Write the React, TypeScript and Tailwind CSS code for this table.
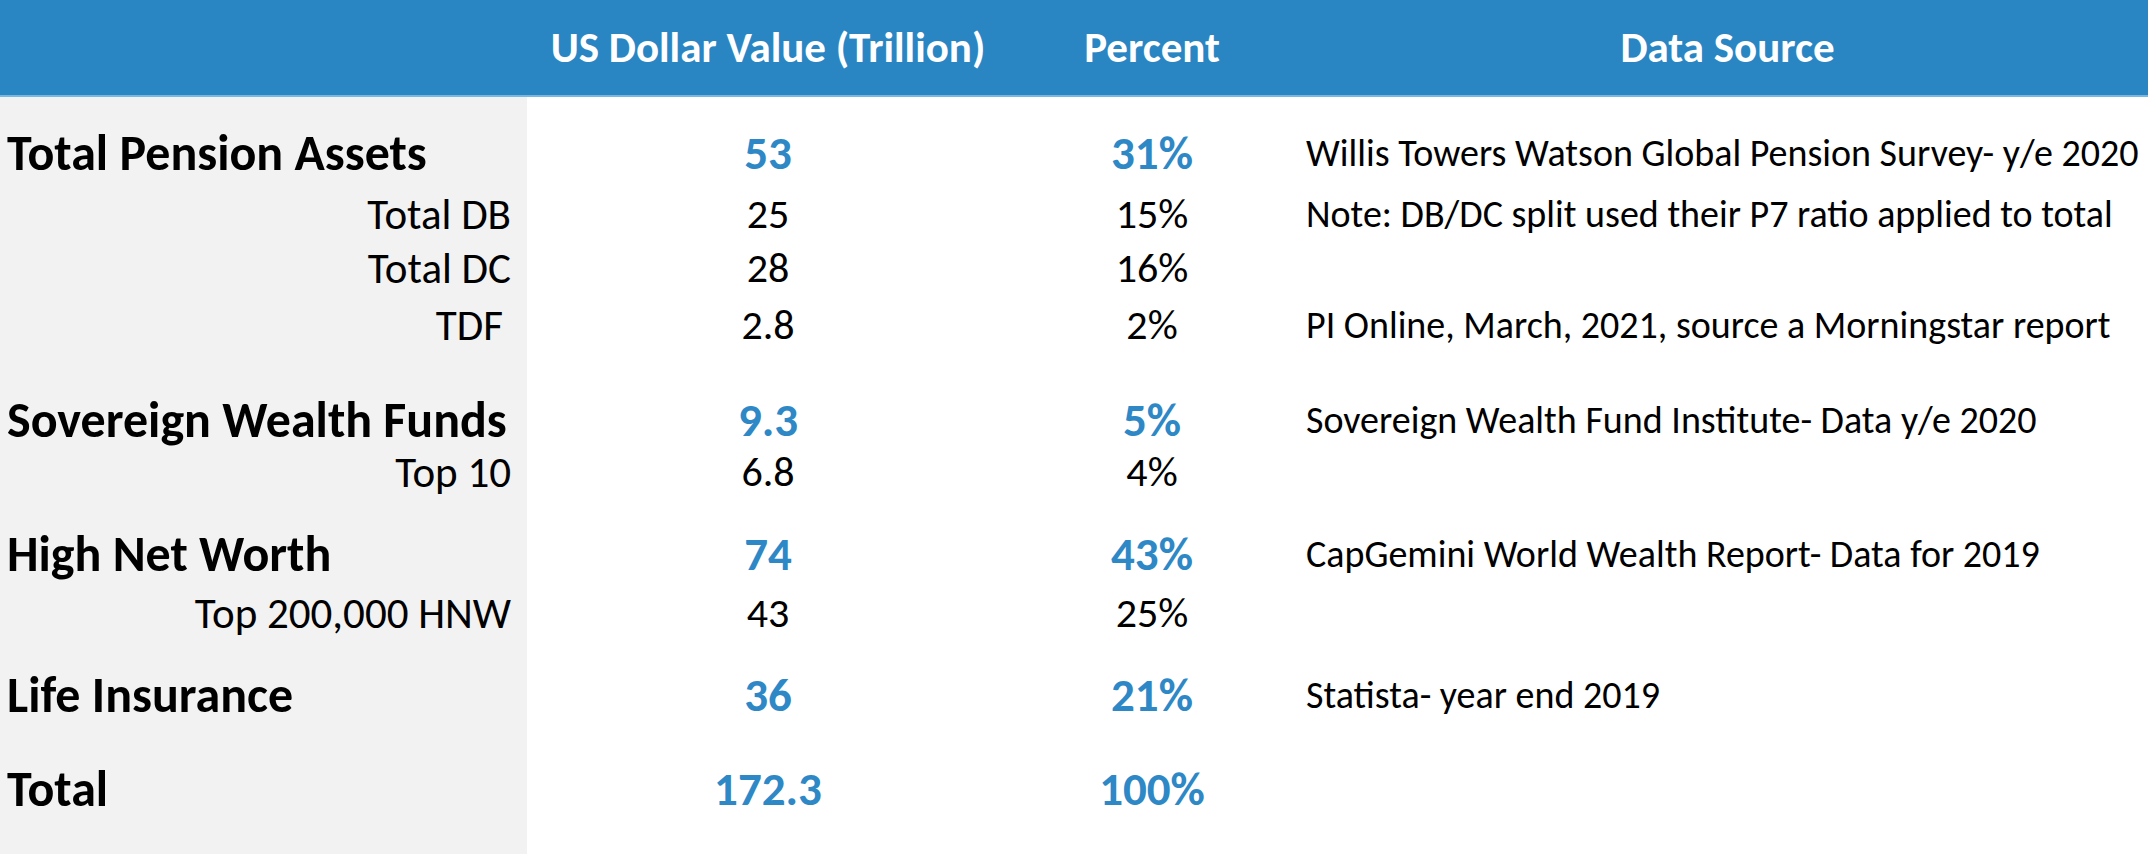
import React from "react";

type Row = {
  label: string;
  bold: boolean;
  value: string;
  pct: string;
  source: string;
  mt: string;
  extraPr?: boolean;
};

const rows: Row[] = [
  { label: "Total Pension Assets", bold: true, value: "53", pct: "31%", source: "Willis Towers Watson Global Pension Survey- y/e 2020", mt: "mt-[30px]" },
  { label: "Total DB", bold: false, value: "25", pct: "15%", source: "Note: DB/DC split used their P7 ratio applied to total", mt: "mt-[9px]" },
  { label: "Total DC", bold: false, value: "28", pct: "16%", source: "", mt: "mt-[2px]" },
  { label: "TDF", bold: false, value: "2.8", pct: "2%", source: "PI Online, March, 2021, source a Morningstar report", mt: "mt-[5px]", extraPr: true },
  { label: "Sovereign Wealth Funds", bold: true, value: "9.3", pct: "5%", source: "Sovereign Wealth Fund Institute- Data y/e 2020", mt: "mt-[43px]" },
  { label: "Top 10", bold: false, value: "6.8", pct: "4%", source: "", mt: "mt-[0px]" },
  { label: "High Net Worth", bold: true, value: "74", pct: "43%", source: "CapGemini World Wealth Report- Data for 2019", mt: "mt-[30px]" },
  { label: "Top 200,000 HNW", bold: false, value: "43", pct: "25%", source: "", mt: "mt-[7px]" },
  { label: "Life Insurance", bold: true, value: "36", pct: "21%", source: "Statista- year end 2019", mt: "mt-[30px]" },
  { label: "Total", bold: true, value: "172.3", pct: "100%", source: "", mt: "mt-[42px]" },
];

export default function App() {
  return (
    <div
      className="w-[2148px] h-[862px] bg-white overflow-hidden text-black"
      style={{ fontFamily: "Carlito, Lato, 'Liberation Sans', sans-serif" }}
    >
      {/* Header */}
      <div className="flex h-[95px] bg-[#2a86c3] text-white font-bold text-[43px] leading-none">
        <div className="w-[527px]" />
        <div className="w-[482px] flex items-center justify-center">US Dollar Value (Trillion)</div>
        <div className="w-[286px] flex items-center justify-center">Percent</div>
        <div className="flex-1 flex items-center justify-center pl-[12px]">Data Source</div>
      </div>
      <div className="h-[2px] bg-[#7ab7e0]" />
      {/* Body */}
      <div className="flex h-[757px]">
        <div className="w-[527px] bg-[#f2f2f2] flex flex-col">
          {rows.map((r, i) => (
            <div
              key={i}
              className={`h-[52px] flex items-center ${r.mt} ${
                r.bold
                  ? "justify-start pl-[7px] font-bold text-[50px]"
                  : `justify-end text-[43px] ${r.extraPr ? "pr-[24px]" : "pr-[16px]"}`
              } leading-none whitespace-nowrap`}
            >
              {r.label}
            </div>
          ))}
        </div>
        <div className="w-[482px] flex flex-col">
          {rows.map((r, i) => (
            <div
              key={i}
              className={`h-[52px] flex items-center justify-center ${r.mt} leading-none ${
                r.bold ? "font-bold text-[47px] text-[#2e88c6]" : "text-[42px]"
              }`}
            >
              {r.value}
            </div>
          ))}
        </div>
        <div className="w-[286px] flex flex-col">
          {rows.map((r, i) => (
            <div
              key={i}
              className={`h-[52px] flex items-center justify-center ${r.mt} leading-none ${
                r.bold ? "font-bold text-[47px] text-[#2e88c6]" : "text-[42px]"
              }`}
            >
              {r.pct}
            </div>
          ))}
        </div>
        <div className="flex-1 flex flex-col pl-[11px]">
          {rows.map((r, i) => (
            <div
              key={i}
              className={`h-[52px] flex items-center ${r.mt} leading-none text-[38px] whitespace-nowrap`}
            >
              {r.source}
            </div>
          ))}
        </div>
      </div>
    </div>
  );
}
